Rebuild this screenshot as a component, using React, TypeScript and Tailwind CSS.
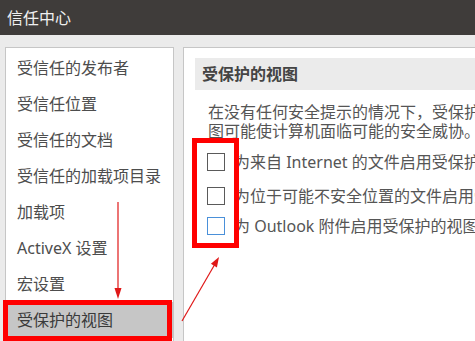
import React from "react";

const items = [
  "受信任的发布者",
  "受信任位置",
  "受信任的文档",
  "受信任的加载项目录",
  "加载项",
  "ActiveX 设置",
  "宏设置",
];

function Box({ blue }: { blue?: boolean }) {
  return (
    <div
      className={
        "w-[18px] h-[18px] shrink-0 bg-white border " +
        (blue ? "border-[#4a90d9]" : "border-[#5a5a5a]")
      }
    />
  );
}

export default function App() {
  return (
    <div
      className="relative w-[475px] h-[341px] overflow-hidden bg-[#ebebeb] flex flex-col"
      style={{ fontFamily: '"Noto Sans", "Noto Sans CJK SC", sans-serif' }}
    >
      <div className="h-[35px] shrink-0 bg-[#3f3c3a] text-[#f0f0f0] text-[16px] pl-[7px] flex items-center leading-none">
        信任中心
      </div>
      <div className="flex flex-1 pt-[12px] pl-[5px] gap-[9px] min-h-0">
        <div className="w-[169px] shrink-0 bg-white border border-b-0 border-[#c6c6c6] pt-[2px]">
          {items.map((t) => (
            <div
              key={t}
              className="h-[36px] flex items-center pl-[11px] text-[16px] text-[#4d4d4d] leading-none whitespace-nowrap"
            >
              {t}
            </div>
          ))}
          <div className="relative h-[36px] flex items-center pl-[11px] text-[16px] text-[#3a3a3a] leading-none bg-[#c6c6c6] whitespace-nowrap">
            受保护的视图
            <div className="absolute left-[-3px] top-[-2px] w-[169px] h-[41px] border-[5px] border-[#ff0000]" />
          </div>
        </div>
        <div className="flex-1 min-w-0 bg-white border-l border-t border-[#c6c6c6] pl-[11px] pt-[10px] overflow-hidden">
          <div className="h-[32px] bg-[#ebebeb] pl-[7px] flex items-center text-[16px] font-bold text-[#444] leading-none whitespace-nowrap">
            受保护的视图
          </div>
          <div className="mt-[13px] pl-[13px] text-[16px] leading-[19px] text-[#555] whitespace-nowrap">
            <div>在没有任何安全提示的情况下，受保护的视图可在受限模式下打开文件</div>
            <div>图可能使计算机面临可能的安全威协。</div>
          </div>
          <div className="pl-[12px] text-[16px] text-[#555] leading-none whitespace-nowrap">
            <div className="mt-[6px] h-[30px] flex items-center gap-[9px]">
              <Box />
              <span>为来自 Internet 的文件启用受保护的视图</span>
            </div>
            <div className="mt-[4px] h-[30px] flex items-center gap-[9px]">
              <Box />
              <span>为位于可能不安全位置的文件启用受保护的视图</span>
            </div>
            <div className="h-[30px] flex items-center gap-[9px]">
              <Box blue />
              <span>为 Outlook 附件启用受保护的视图</span>
            </div>
          </div>
        </div>
      </div>

      <div className="absolute left-[192px] top-[138px] w-[47px] h-[110px] border-[5px] border-[#ff0000]" />

      <svg
        className="absolute left-0 top-0 pointer-events-none"
        width="475"
        height="341"
        viewBox="0 0 475 341"
      >
        <line x1="118" y1="202" x2="118" y2="290" stroke="#e01818" strokeWidth="1.2" />
        <polygon points="114.5,288 121.5,288 118,299" fill="#e01818" />
        <line x1="182" y1="321" x2="215" y2="264" stroke="#e01818" strokeWidth="1.2" />
        <polygon points="219,257 216.9,267.4 210.9,263.8" fill="#e01818" />
      </svg>
    </div>
  );
}
